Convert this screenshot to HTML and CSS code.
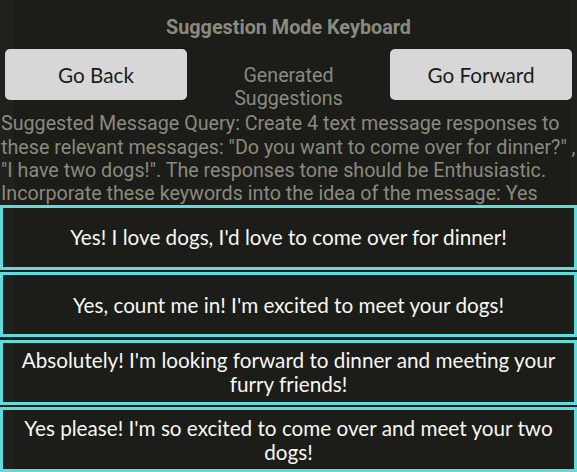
FILE: index.html
```html
<!DOCTYPE html>
<html>
<head>
<meta charset="utf-8">
<link rel="stylesheet" href="styles.css">
</head>
<body>
<div class="screen">
  <h1 class="title">Suggestion Mode Keyboard</h1>
  <div class="nav">
    <button class="nav-btn">Go Back</button>
    <div class="nav-label">Generated<br>Suggestions</div>
    <button class="nav-btn">Go Forward</button>
  </div>
  <p class="query">Suggested Message Query: Create 4 text message responses to these relevant messages: "Do you want to come over for dinner?" , "I have two dogs!". The responses tone should be Enthusiastic. Incorporate these keywords into the idea of the message: Yes</p>
  <div class="cards">
    <div class="card">Yes! I love dogs, I'd love to come over for dinner!</div>
    <div class="card">Yes, count me in! I'm excited to meet your dogs!</div>
    <div class="card">Absolutely! I'm looking forward to dinner and meeting your furry friends!</div>
    <div class="card">Yes please! I'm so excited to come over and meet your two dogs!</div>
  </div>
</div>
</body>
</html>
```
FILE: styles.css
```css
html, body {
  margin: 0;
  padding: 0;
}
body {
  background: linear-gradient(to right, #20201c 0, #20201c 14px, #1c1c18 14px, #1c1c18 570px, #20201c 570px);
  width: 577px;
  height: 472px;
  overflow: hidden;
  font-family: Roboto, "Liberation Sans", sans-serif;
}
.screen {
  display: flex;
  flex-direction: column;
}
.title {
  margin: 0;
  padding-top: 16px;
  height: 49px;
  box-sizing: border-box;
  text-align: center;
  font-size: 19.8px;
  line-height: 24px;
  font-weight: bold;
  color: #8a8a7e;
}
.nav {
  display: flex;
  justify-content: space-between;
  align-items: flex-start;
  padding: 0 5px;
}
.nav-btn {
  width: 182px;
  height: 51px;
  margin: 0;
  padding: 0;
  border: none;
  border-radius: 5px;
  background: #d6d7d6;
  color: #1b1b1b;
  font-family: Lato, "Open Sans", sans-serif;
  font-size: 20.7px;
}
.nav-label {
  padding-top: 14.5px;
  text-align: center;
  color: #8a8a7e;
  font-size: 19.7px;
  line-height: 23px;
}
.query {
  margin: 2.8px 0 0 0;
  padding: 0 0 0 1px;
  color: #8a8a7e;
  font-size: 19.7px;
  line-height: 23.3px;
}
.cards {
  display: flex;
  flex-direction: column;
  gap: 2.5px;
  margin-top: -0.5px;
}
.card {
  height: 65px;
  flex: none;
  box-sizing: border-box;
  border: 3px solid #62dbdd;
  display: flex;
  align-items: center;
  justify-content: center;
  text-align: center;
  color: #f7f7f5;
  font-family: Lato, "Open Sans", sans-serif;
  font-size: 20.7px;
  line-height: 24px;
  padding: 0 10px;
}
```
